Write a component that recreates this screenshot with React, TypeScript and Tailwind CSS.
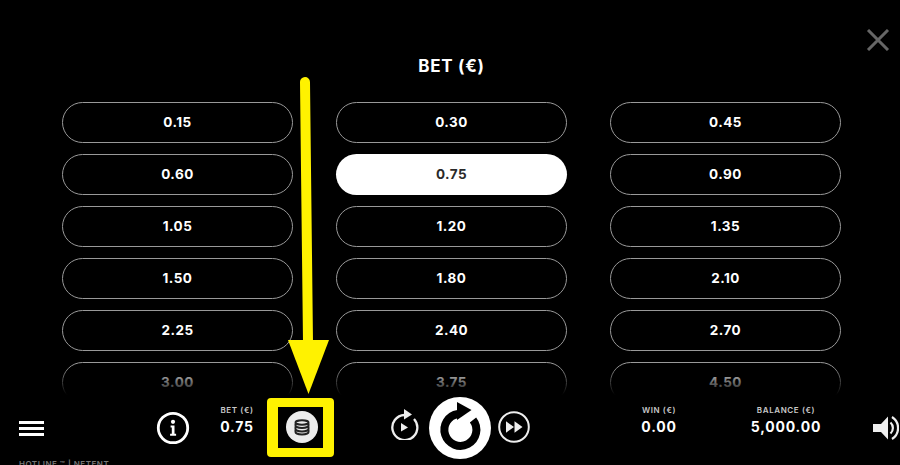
const bets = [
  '0.15', '0.30', '0.45',
  '0.60', '0.75', '0.90',
  '1.05', '1.20', '1.35',
  '1.50', '1.80', '2.10',
  '2.25', '2.40', '2.70',
  '3.00', '3.75', '4.50',
]

function CoinStack() {
  return (
    <svg width="32" height="32" viewBox="0 0 32 32">
      <circle cx="16" cy="16" r="16" fill="#ececec" />
      <g fill="none" stroke="#222" strokeWidth="2">
        <ellipse cx="16" cy="11.5" rx="6.5" ry="2.2" />
        <path d="M9.5 12.5v2c0 1.3 2.9 2.4 6.5 2.4s6.5-1.1 6.5-2.4v-2" />
        <path d="M9.5 15.5v2.6c0 1.3 2.9 2.4 6.5 2.4s6.5-1.1 6.5-2.4v-2.6" />
        <path d="M9.5 18.8v2.3c0 1.3 2.9 2.4 6.5 2.4s6.5-1.1 6.5-2.4v-2.3" />
      </g>
    </svg>
  )
}

function InfoIcon() {
  return (
    <svg width="34" height="34" viewBox="0 0 34 34">
      <circle cx="17" cy="17" r="14.7" fill="none" stroke="#fff" strokeWidth="2.8" />
      <circle cx="17" cy="10.8" r="2.1" fill="#fff" />
      <path d="M14.6 14.6h3.9v8.2h1.6v2h-6v-2h1.7v-6.2h-1.2z" fill="#fff" />
    </svg>
  )
}

function ReplayIcon() {
  return (
    <svg width="30" height="32" viewBox="0 0 30 32">
      <path d="M14.5 7A12.5 12.5 0 1 0 24 11" fill="none" stroke="#eee" strokeWidth="2.3" />
      <path d="M14 1l8 5.5-8 5z" fill="#eee" />
      <path d="M11 15l7 4.5-7 4z" fill="#eee" />
    </svg>
  )
}

function SpinIcon() {
  return (
    <svg width="64" height="64" viewBox="0 0 64 64">
      <circle cx="32" cy="32" r="31" fill="#fff" />
      <path d="M30 18A16 16 0 1 0 45 24" fill="none" stroke="#000" strokeWidth="8" />
      <path d="M29 6L43.5 14 29 24z" fill="#000" />
    </svg>
  )
}

function ForwardIcon() {
  return (
    <svg width="32" height="32" viewBox="0 0 32 32">
      <circle cx="16" cy="16" r="14.8" fill="none" stroke="#eee" strokeWidth="2" />
      <path d="M8 10.3l8 5.7-8 5.7zM16.5 10.3l8 5.7-8 5.7z" fill="#eee" />
    </svg>
  )
}

function SoundIcon() {
  return (
    <svg width="26" height="26" viewBox="0 0 26 26">
      <path d="M0 9h8l7-7.5v23L8 17H0z" fill="#eee" />
      <path d="M17.5 7.5a7.5 7.5 0 0 1 0 11" fill="none" stroke="#eee" strokeWidth="2.2" />
      <path d="M19 2a13 13 0 0 1 0 22" fill="none" stroke="#eee" strokeWidth="2.2" />
    </svg>
  )
}

function Stat({ label, value, className }: { label: string; value: string; className: string }) {
  return (
    <div className={`flex -translate-y-[8px] flex-col items-center ${className}`}>
      <span className="text-[8px] leading-[10px] font-semibold tracking-[0.6px] text-[#c9c9c9]">{label}</span>
      <span className="mt-[3px] text-[14px] leading-[17px] font-bold tracking-[0.8px] text-white">{value}</span>
    </div>
  )
}

export default function App() {
  return (
    <div className="relative h-[465px] w-[900px] overflow-hidden bg-black font-['Inter',sans-serif]">
      <svg className="absolute left-[866px] top-[29px]" width="24" height="22" viewBox="0 0 24 22">
        <path d="M2 1l20 20M22 1L2 21" stroke="#666" strokeWidth="3" />
      </svg>

      <h1 className="pt-[56px] pl-[3px] text-center text-[17px] leading-[21px] font-bold tracking-[0.7px] text-white">BET (€)</h1>

      <div className="relative mt-[25px] h-[293px] overflow-hidden">
        <div className="ml-[62px] grid w-[779px] grid-cols-3 gap-x-[43px] gap-y-[11px]">
          {bets.map(bet => (
            <button
              key={bet}
              className={
                bet === '0.75'
                  ? 'h-[41px] rounded-full bg-white text-[13.5px] font-bold tracking-[0.5px] text-[#2a2a2a]'
                  : 'h-[41px] rounded-full border border-[#999] text-[13.5px] font-bold tracking-[0.5px] text-white'
              }
            >
              {bet}
            </button>
          ))}
        </div>
        <div className="absolute inset-x-0 bottom-0 h-[30px] bg-gradient-to-b from-transparent to-black" />
      </div>

      <div className="flex h-[66px] items-center">
        <div className="ml-[19px] flex w-[25px] flex-col gap-[3px]">
          <span className="h-[3px] bg-white" />
          <span className="h-[3px] bg-white" />
          <span className="h-[3px] bg-white" />
        </div>
        <div className="ml-[112px]"><InfoIcon /></div>
        <Stat label="BET (€)" value="0.75" className="ml-[22px] w-[50px]" />
        <div className="ml-[24px] -translate-y-[1px]"><CoinStack /></div>
        <div className="ml-[72px] -translate-y-[4px]"><ReplayIcon /></div>
        <div className="ml-[8px]"><SpinIcon /></div>
        <div className="ml-[6px] -translate-y-[1px]"><ForwardIcon /></div>
        <Stat label="WIN (€)" value="0.00" className="ml-[104px] w-[50px]" />
        <Stat label="BALANCE (€)" value="5,000.00" className="ml-[62px] w-[80px]" />
        <div className="ml-[47px]"><SoundIcon /></div>
      </div>

      <p className="absolute left-[19px] top-[459px] text-[8px] leading-[10px] font-semibold tracking-[0.5px] text-[#777]">HOTLINE ™ | NETENT</p>

      {/* yellow callout drawn on top of the screenshot */}
      <div className="absolute left-[267px] top-[398px] h-[59px] w-[67px] rounded-[4px] border-x-[11px] border-y-[9px] border-[#fff200]" />
      <svg className="absolute left-0 top-0" width="900" height="465" viewBox="0 0 900 465">
        <path d="M305 82L308 342" stroke="#fff200" strokeWidth="10" strokeLinecap="round" />
        <path d="M288 340H329L308.5 394z" fill="#fff200" />
      </svg>
    </div>
  )
}
